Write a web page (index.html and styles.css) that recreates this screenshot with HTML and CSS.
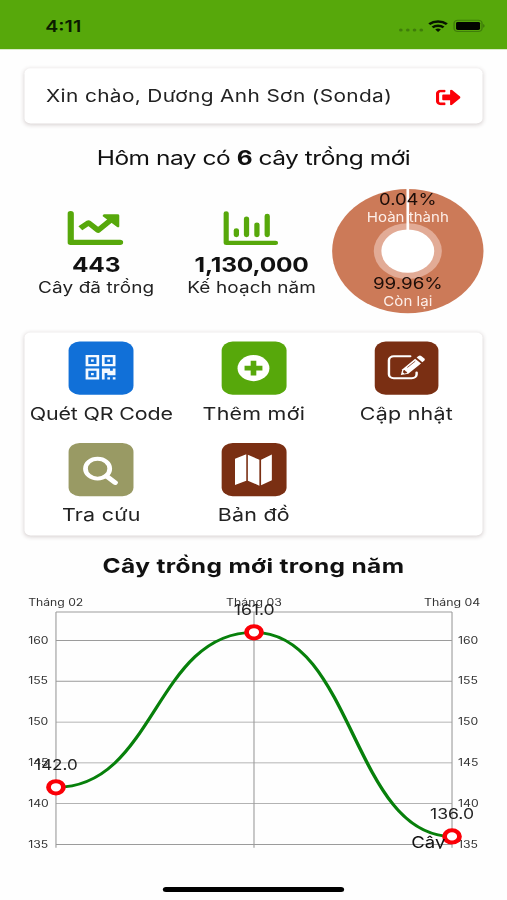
FILE: index.html
```html
<!DOCTYPE html>
<html lang="vi">
<head>
<meta charset="utf-8">
<meta name="viewport" content="width=device-width, initial-scale=1">
<title>Cây trồng</title>
<link rel="stylesheet" href="styles.css">
</head>
<body>
<div class="screen">
  <header class="status">
    <span class="clock">4:11</span>
    <svg class="status-icons" width="70" height="14" viewBox="0 0 70 14">
      <g fill="#3f7d0a"><circle cx="2.3" cy="10.8" r="1.5"/><circle cx="8" cy="10.8" r="1.5"/><circle cx="13.5" cy="10.8" r="1.5"/><circle cx="19" cy="10.8" r="1.5"/></g>
      <g fill="none" stroke="#071500" stroke-width="2.3">
        <path d="M25.5 5.1a11 11 0 0 1 14.4 0"/>
        <path d="M28.2 8.300a7 7 0 0 1 9 0"/>
      </g>
      <path d="M32.700 12.900l-2.300-2.500a3.500 3.500 0 0 1 4.600 0z" fill="#071500"/>
      <rect x="45.800" y="1.200" width="22.800" height="11.200" rx="3" fill="none" stroke="#3f7d0a" stroke-width="1.100"/>
      <rect x="47.400" y="2.800" width="19.600" height="8" rx="1.400" fill="#020500"/>
      <path d="M69.400 5v3.600q1.400-.6 1.400-1.800T69.400 5z" fill="#3f7d0a"/>
    </svg>
  </header>

  <main>
    <section class="card greeting">
      <span class="name">Xin chào, Dương Anh Sơn (Sonda)</span>
      <svg class="logout" width="20.5" height="16" viewBox="0 56 512 400" preserveAspectRatio="none" fill="#fb0007">
        <path d="M497 273L329 441c-15 15-41 4.500-41-17v-96H152c-13.300 0-24-10.700-24-24v-96c0-13.300 10.700-24 24-24h136V88c0-21.400 25.900-32 41-17l168 168c9.300 9.400 9.300 24.600 0 34zM192 436v-40c0-6.600-5.400-12-12-12H96c-17.700 0-32-14.300-32-32V160c0-17.700 14.300-32 32-32h84c6.600 0 12-5.400 12-12V76c0-6.600-5.400-12-12-12H96c-53 0-96 43-96 96v192c0 53 43 96 96 96h84c6.600 0 12-5.400 12-12z"/>
      </svg>
    </section>

    <h1 class="today">Hôm nay có <b>6</b> cây trồng mới</h1>

    <section class="stats">
      <div class="stat">
        <svg width="46" height="35" viewBox="0 0 46 35">
          <path d="M2.700 2.700v28.500H43" fill="none" stroke="#57a80b" stroke-width="5.200" stroke-linecap="round" stroke-linejoin="round"/>
          <path d="M10.600 17.300L17.300 11.800L25.200 19.300L36 8.600" fill="none" stroke="#57a80b" stroke-width="5" stroke-linejoin="round"/>
          <path d="M30 3.300h11q1.400 0 1.400 1.300v10.800q-.4 1.400-1.800.6L28.900 5.200q-.4-1.600 1.100-1.900z" fill="#57a80b"/>
        </svg>
        <strong class="count">443</strong>
        <span class="caption">Cây đã trồng</span>
      </div>
      <div class="stat">
        <svg width="46" height="35" viewBox="0 0 46 35" fill="none" stroke="#57a80b">
          <path d="M2.700 2.300v29.500H43" stroke-width="4.200" stroke-linecap="round" stroke-linejoin="round"/>
          <path d="M11 19.300V24M19.300 7.800V24M27.800 13.600V24M36.200 5V24" stroke-width="4.300" stroke-linecap="round"/>
        </svg>
        <strong class="count">1,130,000</strong>
        <span class="caption">Kế hoạch năm</span>
      </div>
      <svg class="pie" width="126" height="126" viewBox="-63 -63 126 126">
        <circle r="61.800" fill="#cc7a58"/>
        <circle r="27.800" fill="#e2ab96"/>
        <circle r="21.600" fill="#fff"/>
        <path d="M0-63V-20" stroke="#fff" stroke-width="2.200"/>
        <g text-anchor="middle">
          <text class="pct" y="-45.500" textLength="47" lengthAdjust="spacingAndGlyphs">0.04%</text>
          <text class="part" y="-28.800" textLength="67" lengthAdjust="spacingAndGlyphs">Hoàn thành</text>
          <text class="pct" y="38" textLength="57" lengthAdjust="spacingAndGlyphs">99.96%</text>
          <text class="part" y="54.700" textLength="40" lengthAdjust="spacingAndGlyphs">Còn lại</text>
        </g>
      </svg>
    </section>

    <nav class="card actions">
      <a class="action">
        <svg class="tile blue" viewBox="0 0 52.700 52.700">
          <g transform="translate(13.900 13.500) scale(2.220)" fill="#f4f9ff">
            <path fill-rule="evenodd" d="M0 0h5v5H0zM1 1v3h3V1zM6 0h5v5H6zM7 1v3h3V1zM0 6h5v5H0zM1 7v3h3V7z"/>
            <path d="M2 2h1v1H2zM8 2h1v1H8zM2 8h1v1H2zM11 6v3H8V8H7v3H6V6h3v1h1V6zM8 10h1v1H8zM10 10h1v1h-1z"/>
          </g>
        </svg>
        <span class="label tight">Quét QR Code</span>
      </a>
      <a class="action">
        <svg class="tile green" viewBox="0 0 52.700 52.700">
          <circle cx="26" cy="26.500" r="13" fill="#fff"/>
          <path d="M26 19.200v14.600M18.700 26.500h14.600" stroke="#57a80b" stroke-width="4.600"/>
        </svg>
        <span class="label">Thêm mới</span>
      </a>
      <a class="action">
        <svg class="tile brown" viewBox="0 0 52.700 52.700">
          <path d="M29 14.600H15.600a4 4 0 0 0-4 4v14a4 4 0 0 0 4 4h14.600a4 4 0 0 0 4-4v-1.800" fill="none" stroke="#fff" stroke-width="2" stroke-linecap="round"/>
          <path d="M21.300 33.300l1.300-5.800L33 17.200l4.800 4.700-10.400 10.300z" fill="#fff"/>
          <path d="M34.200 16l1.600-1.700q1.100-.9 2.200 0l2.500 2.500q.9 1.100 0 2.200l-1.600 1.700z" fill="#fff"/>
          <path d="M23.900 28.500l2.500 2.500-2.200.5-.9-.9zM26.600 25.900l6.500-6.300" fill="#7a2f13" stroke="#7a2f13" stroke-width=".7"/>
        </svg>
        <span class="label">Cập nhật</span>
      </a>
      <a class="action">
        <svg class="tile olive" viewBox="0 0 52.700 52.700" fill="none" stroke="#fff">
          <circle cx="23.700" cy="25.600" r="9.900" stroke-width="3.900"/>
          <path d="M31 33l7 6.500" stroke-width="4.500" stroke-linecap="round"/>
        </svg>
        <span class="label">Tra cứu</span>
      </a>
      <a class="action">
        <svg class="tile brown" viewBox="0 0 52.700 52.700" fill="#fff">
          <path d="M10.900 15.600L20.100 11.300V37.700L10.900 41.900zM21.400 11.700L30.800 16.700V42.500L21.400 37.600zM32.200 16.700L41 11.600V37.200L32.200 42.200z"/>
        </svg>
        <span class="label">Bản đồ</span>
      </a>
    </nav>

    <h2 class="chart-title">Cây trồng mới trong năm</h2>

    <svg class="chart" width="414" height="255" viewBox="0 590 414 255">
      <g fill="none" stroke="#9b9b9b" stroke-width=".9">
        <path d="M45.700 609.300H369.100M45.700 637.600H369.100M45.700 678.200H369.100M45.700 718.900H369.100M45.700 759.500H369.100M45.700 800.100H369.100M45.700 840.700H369.100"/>
        <path d="M45.700 609.300V844M207.400 609.300V844M369.100 609.300V844"/>
      </g>
      <g class="tick">
        <text x="23" y="603.300" textLength="45" lengthAdjust="spacingAndGlyphs">Tháng 02</text>
        <text x="184.600" y="603.300" textLength="45.500" lengthAdjust="spacingAndGlyphs">Tháng 03</text>
        <text x="346.200" y="603.300" textLength="46" lengthAdjust="spacingAndGlyphs">Tháng 04</text>
        <text x="23" y="640.800">160</text><text x="23" y="681.400">155</text><text x="23" y="722.100">150</text>
        <text x="23" y="762.700">145</text><text x="23" y="803.300">140</text><text x="23" y="843.900">135</text>
        <text x="374" y="640.800">160</text><text x="374" y="681.400">155</text><text x="374" y="722.100">150</text>
        <text x="374" y="762.700">145</text><text x="374" y="803.300">140</text><text x="374" y="843.900">135</text>
      </g>
      <path d="M45.700 783.800C126.550 783.800 126.550 629.500 207.400 629.500S288.250 832.700 369.100 832.700" fill="none" stroke="#07800b" stroke-width="2.800"/>
      <g fill="#fff" stroke="#fb0007" stroke-width="3.900">
        <circle cx="45.700" cy="783.800" r="6.100"/>
        <circle cx="207.400" cy="629.500" r="6.100"/>
        <circle cx="369.100" cy="832.700" r="6.100"/>
      </g>
      <g class="value" text-anchor="middle">
        <text x="45.700" y="766.500" textLength="35.500" lengthAdjust="spacingAndGlyphs">142.0</text>
        <text x="207.600" y="612.300" textLength="33.500" lengthAdjust="spacingAndGlyphs">161.0</text>
        <text x="369.100" y="815.800" textLength="36" lengthAdjust="spacingAndGlyphs">136.0</text>
      </g>
      <text class="series" x="335.800" y="844.300" textLength="28" lengthAdjust="spacingAndGlyphs">Cây</text>
    </svg>
  </main>
  <div class="home-bar"></div>
</div>
</body>
</html>
```
FILE: styles.css
```css
* { box-sizing: border-box; }

html, body {
  margin: 0;
  height: 900px;
  overflow: hidden;
  background: #fefefe;
}

.screen {
  width: 414px;
  height: 896px;
  display: flex;
  flex-direction: column;
  transform: scale(1.22464, 1.00446);
  transform-origin: 0 0;
  font-family: Inter, "Noto Sans", sans-serif;
  color: #111;
  line-height: 1;
}

.screen svg { display: block; flex: none; }

.status {
  height: 48.6px;
  flex: none;
  padding: 2.5px 18.700px 0 37px;
  display: flex;
  align-items: center;
  justify-content: space-between;
  background: #57a80b;
}

.clock {
  font-size: 16px;
  font-weight: 600;
  color: #0b1c00;
}

.status-icons { overflow: visible; }

main {
  flex: 1;
  display: flex;
  flex-direction: column;
}

.card {
  margin: 0 19.800px 0 20.400px;
  background: #fff;
  border-radius: 5px;
  box-shadow: 0 1px 4px rgba(60, 30, 30, .2);
}

.greeting {
  height: 55.5px;
  margin-top: 19.400px;
  padding: 2.200px 18.200px 0 17.200px;
  display: flex;
  align-items: center;
  justify-content: space-between;
  color: #222;
}

.name {
  font-size: 17px;
  letter-spacing: .3px;
  white-space: nowrap;
}

.today {
  height: 44px;
  margin: 11.800px 0 0;
  line-height: 44px;
  text-align: center;
  font-size: 20px;
  font-weight: 400;
  letter-spacing: -.4px;
}

.stats {
  height: 152px;
  padding: 0 16px 0 15px;
  display: grid;
  grid-template-columns: repeat(3, 127px);
}

.stat {
  padding-top: 31px;
  display: flex;
  flex-direction: column;
  align-items: center;
  white-space: nowrap;
}

.stat > svg { margin-right: 1.4px; }

.count {
  margin-top: 9px;
  font-size: 20px;
  font-weight: 700;
  letter-spacing: -.15px;
}

.caption {
  margin-top: 5px;
  font-size: 15.5px;
  letter-spacing: .07px;
  color: #222;
}

.pie {
  margin-top: 8px;
  margin-left: 1px;
  justify-self: center;
  font-family: Inter, sans-serif;
}

.pct { font-size: 16px; fill: #1c0d08; }
.part { font-size: 13.5px; fill: #fdeee8; }

.actions {
  height: 202px;
  padding-top: 9px;
  display: grid;
  grid-template-columns: repeat(3, 1fr);
  grid-auto-rows: 100.8px;
}

.action {
  display: flex;
  flex-direction: column;
  align-items: center;
  white-space: nowrap;
}

.tile {
  width: 52.7px;
  height: 52.7px;
  border-radius: 9px;
}

.blue { background: #1170d8; }
.green { background: #57a80b; }
.brown { background: #7a2f13; }
.olive { background: #999a64; }

.label {
  margin-top: 10.5px;
  font-size: 17.5px;
  letter-spacing: .2px;
  color: #222;
}

.label.tight { letter-spacing: -.12px; }

.chart-title {
  height: 30px;
  margin: 15px 0 0;
  line-height: 30px;
  text-align: center;
  font-size: 20px;
  font-weight: 700;
  letter-spacing: .28px;
}

.chart {
  margin-top: 12px;
  overflow: hidden;
  font-family: Inter, sans-serif;
}

.tick { font-size: 10px; fill: #333; }
.value { font-size: 14.5px; fill: #222; }
.series { font-size: 16px; fill: #111; }

.home-bar {
  width: 148px;
  height: 5.2px;
  margin: 0 auto 8px;
  border-radius: 3px;
  background: #000;
  flex: none;
}
```
